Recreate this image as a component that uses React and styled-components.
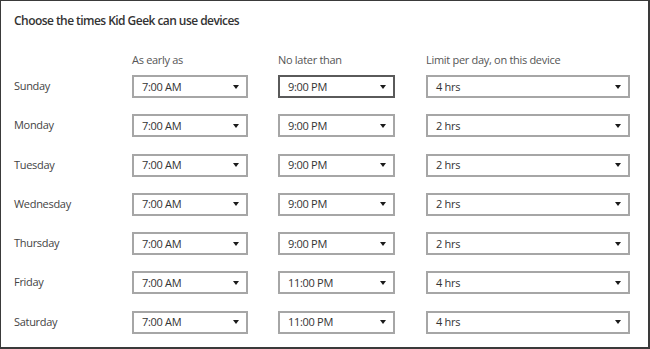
import styled, { createGlobalStyle } from "styled-components";

const GlobalStyle = createGlobalStyle`
  html, body {
    margin: 0;
    padding: 0;
    background: #fff;
  }
`;

const Frame = styled.div`
  box-sizing: border-box;
  width: 650px;
  height: 349px;
  border: 1px solid #3a3a3a;
  border-right-width: 2px;
  border-bottom-width: 2px;
  padding: 12px 0 0 13px;
  font-family: "Open Sans", "Noto Sans", sans-serif;
  background: #fff;
`;

const Title = styled.h1`
  margin: 0 0 23px;
  font-size: 12px;
  line-height: 16px;
  font-weight: 600;
  letter-spacing: -0.55px;
  color: #333;
`;

const Table = styled.div`
  display: grid;
  grid-template-columns: 118px 146px 148px 204px;
  row-gap: 16.3px;
  align-items: start;
  font-size: 11px;
  line-height: 16px;
  letter-spacing: -0.3px;
`;

const Row = styled.div`
  display: contents;
`;

const ColHead = styled.div`
  color: #555;
  margin-bottom: -9.3px;
  white-space: nowrap;
`;

const DayLabel = styled.div`
  padding-top: 3px;
  color: #444;
`;

const Select = styled.div`
  box-sizing: border-box;
  display: flex;
  align-items: center;
  justify-content: space-between;
  width: ${(p) => p.$width}px;
  height: 23px;
  padding: 0 7px 0 8px;
  border: 2px solid ${(p) => (p.$focused ? "#5a5a5a" : "#a6a6a6")};
  background: #fff;
  color: #333;
`;

const Arrow = styled.span`
  width: 0;
  height: 0;
  border-left: 3px solid transparent;
  border-right: 3px solid transparent;
  border-top: 4px solid #1a1a1a;
`;

const days = [
  ["Sunday", "7:00 AM", "9:00 PM", "4 hrs"],
  ["Monday", "7:00 AM", "9:00 PM", "2 hrs"],
  ["Tuesday", "7:00 AM", "9:00 PM", "2 hrs"],
  ["Wednesday", "7:00 AM", "9:00 PM", "2 hrs"],
  ["Thursday", "7:00 AM", "9:00 PM", "2 hrs"],
  ["Friday", "7:00 AM", "11:00 PM", "4 hrs"],
  ["Saturday", "7:00 AM", "11:00 PM", "4 hrs"],
];

const Dropdown = ({ value, width, focused }) => (
  <Select $width={width} $focused={focused}>
    <span>{value}</span>
    <Arrow />
  </Select>
);

export default function App() {
  return (
    <>
      <GlobalStyle />
      <Frame>
        <Title>Choose the times Kid Geek can use devices</Title>
        <Table>
          <Row>
            <ColHead />
            <ColHead>As early as</ColHead>
            <ColHead>No later than</ColHead>
            <ColHead>Limit per day, on this device</ColHead>
          </Row>
          {days.map(([day, from, to, limit], i) => (
            <Row key={day}>
              <DayLabel>{day}</DayLabel>
              <Dropdown value={from} width={116} />
              <Dropdown value={to} width={117} focused={i === 0} />
              <Dropdown value={limit} width={204} />
            </Row>
          ))}
        </Table>
      </Frame>
    </>
  );
}
